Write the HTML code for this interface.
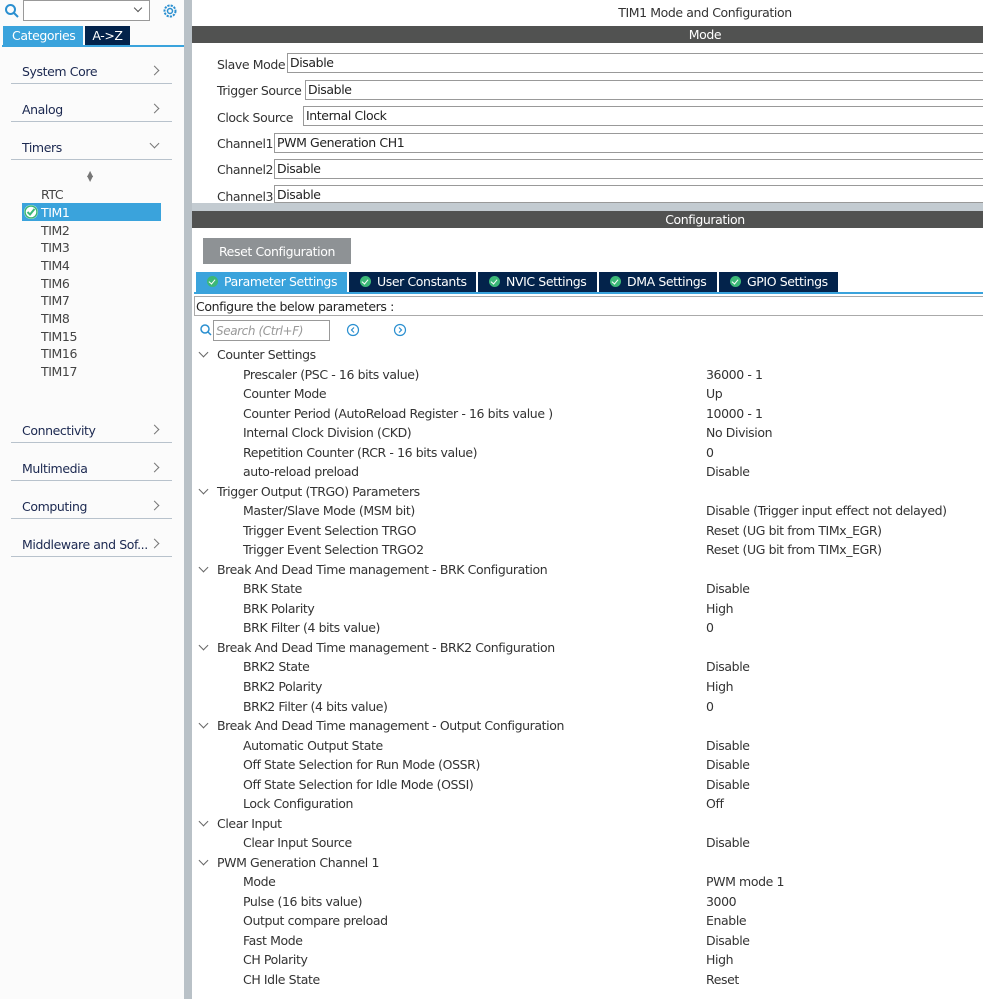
<!DOCTYPE html>
<html><head><meta charset="utf-8"><style>
*{margin:0;padding:0;box-sizing:border-box}
body{width:983px;height:999px;overflow:hidden;background:#fff;font-family:"DejaVu Sans","Liberation Sans",sans-serif;font-size:12px;color:#333;position:relative;letter-spacing:-0.4px}
.a{position:absolute;white-space:nowrap}
#left{position:absolute;left:0;top:0;width:184px;height:999px;background:#fbfbfb}
#sep{position:absolute;left:184px;top:0;width:8px;height:999px;background:#b9c1c7}
.cat{position:absolute;left:11px;width:161px;height:38px;border-bottom:1px solid #b8c2cc;color:#1b2850;font-size:12.5px}
.cat span{position:absolute;left:11px;bottom:4px}
.cat i{position:absolute;right:14px;bottom:9px;width:7px;height:7px;border-right:1px solid #777;border-top:1px solid #777;transform:rotate(45deg)}
.tim{position:absolute;left:41px;color:#444;font-size:12.5px}
.bar{position:absolute;left:192px;width:791px;height:17px;background:#515251;color:#fff;font-size:12.5px;line-height:17px;overflow:hidden}
.bar span{position:absolute;left:0;width:1026px;text-align:center}
.ml{position:absolute;font-size:12.5px;color:#333}
.box{position:absolute;height:20px;border:1px solid #999;background:#fff;right:-2px;padding-left:2px;line-height:18px;font-size:12.5px;color:#222}
.tab{position:absolute;top:272px;height:20px;background:#03234b;color:#fff;font-size:12.5px;line-height:20px;padding-left:11px}
.tab b{display:inline-block;width:11px;height:11px;border-radius:50%;background:#3cb878;margin-right:6px;vertical-align:-1px;position:relative}
.tab b:after{content:"";position:absolute;left:3px;top:2px;width:3px;height:5px;border:solid #fff;border-width:0 1.5px 1.5px 0;transform:rotate(40deg)}
.r{position:absolute;font-size:12.5px;color:#333;white-space:nowrap}
</style></head><body>
<div id="left">
 <svg class="a" style="left:4px;top:3px" width="16" height="16"><circle cx="6.5" cy="6.5" r="4.5" fill="none" stroke="#2a8fd0" stroke-width="2"/><line x1="10" y1="10" x2="14" y2="14" stroke="#2a8fd0" stroke-width="2"/></svg>
 <div class="a" style="left:23px;top:0;width:127px;height:21px;border:1px solid #999;background:#fff"></div>
 <div class="a" style="left:135px;top:5px;width:6px;height:6px;border-right:1px solid #555;border-bottom:1px solid #555;transform:rotate(45deg)"></div>
 <svg class="a" style="left:161px;top:2px" width="18" height="18" viewBox="0 0 18 18"><circle cx="9" cy="9" r="5.5" fill="none" stroke="#2a8fd0" stroke-width="2" stroke-dasharray="2.2 1.1"/><circle cx="9" cy="9" r="2.5" fill="none" stroke="#2a8fd0" stroke-width="1.5"/></svg>
 <div class="a" style="left:3px;top:26px;width:80px;height:20px;background:#3aa3dc;color:#fff;font-size:12.5px;line-height:20px;padding-left:9px">Categories</div>
 <div class="a" style="left:85px;top:26px;width:45px;height:20px;background:#03234b;color:#fff;font-size:12.5px;line-height:20px;text-align:center">A-&gt;Z</div>
 <div class="a" style="left:2px;top:45px;width:182px;height:2px;background:#3aa3dc"></div>
 <div class="cat" style="top:46px"><span>System Core</span><i></i></div>
 <div class="cat" style="top:84px"><span>Analog</span><i></i></div>
 <div class="cat" style="top:122px"><span>Timers</span><i style="transform:rotate(135deg);bottom:12px"></i></div>
 <div class="a" style="left:87px;top:171px;font-size:8px;color:#777;line-height:5px">▲<br>▼</div>
 <div class="tim" style="top:187px">RTC</div>
 <div class="a" style="left:22px;top:203px;width:139px;height:18px;background:#3aa3dc"></div>
 <svg class="a" style="left:23px;top:204px" width="16" height="16"><circle cx="8" cy="8" r="7" fill="#fff"/><circle cx="8" cy="8" r="6" fill="#fff" stroke="#3cb878" stroke-width="1.5"/><path d="M4.5 8 L7 10.5 L11.5 5" fill="none" stroke="#3cb878" stroke-width="2"/></svg>
 <div class="tim" style="top:205px;color:#fff">TIM1</div>
 <div class="tim" style="top:223px">TIM2</div>
 <div class="tim" style="top:240px">TIM3</div>
 <div class="tim" style="top:258px">TIM4</div>
 <div class="tim" style="top:276px">TIM6</div>
 <div class="tim" style="top:293px">TIM7</div>
 <div class="tim" style="top:311px">TIM8</div>
 <div class="tim" style="top:329px">TIM15</div>
 <div class="tim" style="top:346px">TIM16</div>
 <div class="tim" style="top:364px">TIM17</div>
 <div class="cat" style="top:405px"><span>Connectivity</span><i></i></div>
 <div class="cat" style="top:443px"><span>Multimedia</span><i></i></div>
 <div class="cat" style="top:481px"><span>Computing</span><i></i></div>
 <div class="cat" style="top:519px"><span>Middleware and Sof...</span><i></i></div>
</div>
<div id="sep"></div>
<div class="a" style="left:192px;top:203px;width:791px;height:9px;background:#c3cbd1"></div>
<div class="a" style="left:192px;width:1026px;text-align:center;top:5px;font-size:12.5px;color:#333">TIM1 Mode and Configuration</div>
<div class="bar" style="top:26px"><span>Mode</span></div>
<div class="ml" style="left:217px;top:57px">Slave Mode</div><div class="box" style="left:287px;top:53px">Disable</div>
<div class="ml" style="left:217px;top:83px">Trigger Source</div><div class="box" style="left:305px;top:80px">Disable</div>
<div class="ml" style="left:217px;top:110px">Clock Source</div><div class="box" style="left:303px;top:106px">Internal Clock</div>
<div class="ml" style="left:217px;top:136px">Channel1</div><div class="box" style="left:274px;top:133px">PWM Generation CH1</div>
<div class="ml" style="left:217px;top:162px">Channel2</div><div class="box" style="left:274px;top:159px">Disable</div>
<div class="ml" style="left:217px;top:189px">Channel3</div><div class="box" style="left:274px;top:185px;height:18px">Disable</div>
<div class="bar" style="top:211px"><span>Configuration</span></div>
<div class="a" style="left:203px;top:238px;width:148px;height:26px;background:#8e9295;color:#fff;font-size:12.5px;line-height:27px;text-align:center">Reset Configuration</div>
<div class="tab" style="left:196px;width:151px;background:#3aa3dc"><b></b>Parameter Settings</div>
<div class="tab" style="left:349px;width:127px"><b></b>User Constants</div>
<div class="tab" style="left:478px;width:119px"><b></b>NVIC Settings</div>
<div class="tab" style="left:599px;width:118px"><b></b>DMA Settings</div>
<div class="tab" style="left:719px;width:119px"><b></b>GPIO Settings</div>
<div class="a" style="left:194px;top:292px;width:789px;height:2px;background:#3aa3dc"></div>
<div class="a" style="left:194px;top:296px;width:791px;height:20px;border:1px solid #aaa;font-size:12.5px;line-height:19px;padding-left:1px;color:#222">Configure the below parameters :</div>
<svg class="a" style="left:199px;top:323px" width="14" height="14"><circle cx="6" cy="6" r="4" fill="none" stroke="#2a8fd0" stroke-width="1.5"/><line x1="9" y1="9" x2="12" y2="12" stroke="#2a8fd0" stroke-width="1.5"/></svg>
<div class="a" style="left:213px;top:320px;width:117px;height:21px;border:1px solid #999;font-size:12px;font-style:italic;color:#999;line-height:20px;padding-left:2px">Search (Ctrl+F)</div>
<svg class="a" style="left:346px;top:323px" width="14" height="14"><circle cx="7" cy="7" r="5.5" fill="none" stroke="#2a8fd0" stroke-width="1.2"/><path d="M8 4.5 L5.5 7 L8 9.5" fill="none" stroke="#2a8fd0" stroke-width="1.2"/></svg>
<svg class="a" style="left:393px;top:323px" width="14" height="14"><circle cx="7" cy="7" r="5.5" fill="none" stroke="#2a8fd0" stroke-width="1.2"/><path d="M6 4.5 L8.5 7 L6 9.5" fill="none" stroke="#2a8fd0" stroke-width="1.2"/></svg>
<div id="rows"></div>
<script>
var rows=[
["h","Counter Settings"],["Prescaler (PSC - 16 bits value)","36000 - 1"],["Counter Mode","Up"],["Counter Period (AutoReload Register - 16 bits value )","10000 - 1"],["Internal Clock Division (CKD)","No Division"],["Repetition Counter (RCR - 16 bits value)","0"],["auto-reload preload","Disable"],
["h","Trigger Output (TRGO) Parameters"],["Master/Slave Mode (MSM bit)","Disable (Trigger input effect not delayed)"],["Trigger Event Selection TRGO","Reset (UG bit from TIMx_EGR)"],["Trigger Event Selection TRGO2","Reset (UG bit from TIMx_EGR)"],
["h","Break And Dead Time management - BRK Configuration"],["BRK State","Disable"],["BRK Polarity","High"],["BRK Filter (4 bits value)","0"],
["h","Break And Dead Time management - BRK2 Configuration"],["BRK2 State","Disable"],["BRK2 Polarity","High"],["BRK2 Filter (4 bits value)","0"],
["h","Break And Dead Time management - Output Configuration"],["Automatic Output State","Disable"],["Off State Selection for Run Mode (OSSR)","Disable"],["Off State Selection for Idle Mode (OSSI)","Disable"],["Lock Configuration","Off"],
["h","Clear Input"],["Clear Input Source","Disable"],
["h","PWM Generation Channel 1"],["Mode","PWM mode 1"],["Pulse (16 bits value)","3000"],["Output compare preload","Enable"],["Fast Mode","Disable"],["CH Polarity","High"],["CH Idle State","Reset"]];
var h="";
rows.forEach(function(r,i){var y=347+i*19.53;
if(r[0]=="h"){h+='<div class="r" style="left:200px;top:'+(y+2)+'px;width:7px;height:7px;border-right:1px solid #666;border-bottom:1px solid #666;transform:rotate(45deg)"></div><div class="r" style="left:217px;top:'+y+'px">'+r[1]+'</div>';}
else{h+='<div class="r" style="left:243px;top:'+y+'px">'+r[0]+'</div><div class="r" style="left:706px;top:'+y+'px">'+r[1]+'</div>';}});
document.getElementById("rows").innerHTML=h;
</script>
</body></html>
